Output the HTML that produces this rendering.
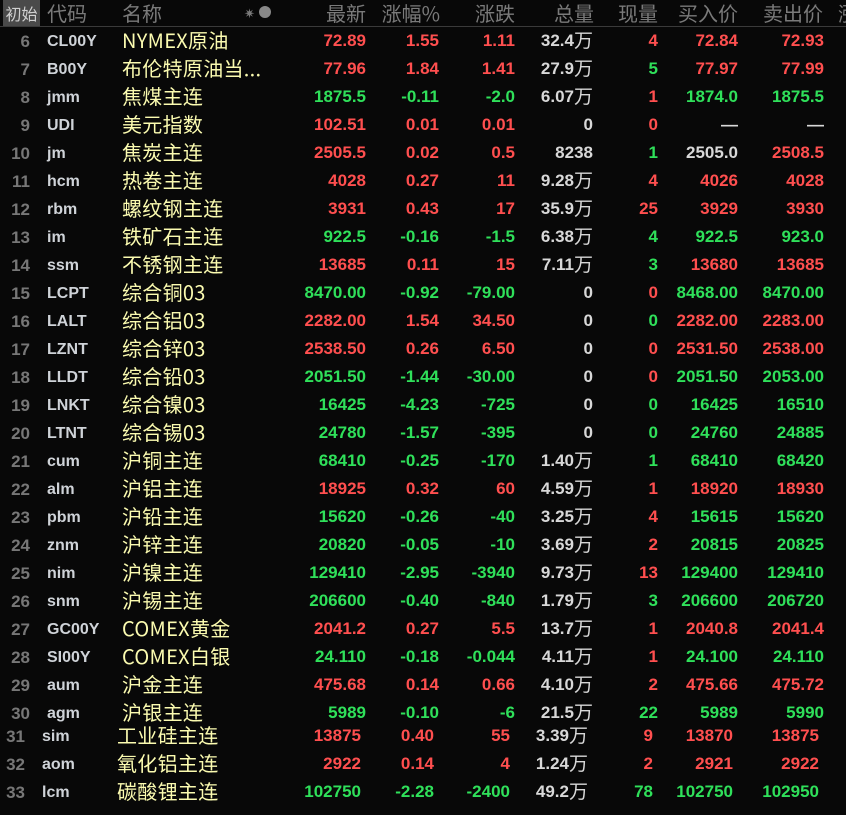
<!DOCTYPE html><html><head><meta charset="utf-8"><style>
body{margin:0;background:#080808;width:846px;height:815px;overflow:hidden;position:relative;font-family:"Liberation Sans",sans-serif}
.h{position:absolute;left:0;top:0;width:846px;height:26px;border-bottom:1px solid #3a3a3a}
.h span{position:absolute;top:0;height:26px;line-height:26px;font-size:20px;color:#7a7a7a;font-family:"Noto Sans CJK SC",sans-serif;white-space:nowrap}
.r{position:absolute;left:0;width:846px;height:28px}
.r span{position:absolute;top:1px;line-height:28px;height:28px;font-size:17px;font-weight:bold;white-space:nowrap}
.s{left:-5px}
.r span.n{right:816px;color:#777;top:2px}.r span.c{left:47px;color:#cfd3d8;font-size:16px;top:2px}
.r span.m{left:122px;top:0;font-family:"Noto Sans CJK SC",sans-serif;font-weight:normal;font-size:20px;color:#fbfbb0;letter-spacing:0.3px}
.a{right:480px}.b{right:407px}.d{right:331px}.v{right:253px;color:#d8d8d8}.x{right:188px}.y{right:108px}.z{right:22px}
.v i{font-style:normal;font-weight:normal;font-family:"Noto Sans CJK SC",sans-serif;font-size:19px;line-height:0;vertical-align:baseline;position:relative;top:1px}
.R{color:#ff4f4f}.G{color:#2fe05a}.W{color:#d8d8d8}
</style></head><body>
<div class="h">
<span style="left:3px;width:37px;background:#4a4a4a;color:#d0d0d0;text-align:center;font-size:16px">初始</span>
<span style="left:47px">代码</span><span style="left:122px">名称</span>
<span style="left:244px;font-size:13px">✷</span><span style="left:259px;top:6px;width:12px;height:12px;border-radius:50%;background:#888"></span>
<span style="right:480px">最新</span><span style="right:406px">涨幅%</span><span style="right:331px">涨跌</span><span style="right:252px">总量</span><span style="right:188px">现量</span><span style="right:108px">买入价</span><span style="right:23px">卖出价</span><span style="left:838px">涨</span>
</div>
<div class="r" style="top:26px"><span class="n">6</span><span class="c">CL00Y</span><span class="m">NYMEX原油</span><span class="a R">72.89</span><span class="b R">1.55</span><span class="d R">1.11</span><span class="v">32.4<i>万</i></span><span class="x R">4</span><span class="y R">72.84</span><span class="z R">72.93</span></div>
<div class="r" style="top:54px"><span class="n">7</span><span class="c">B00Y</span><span class="m">布伦特原油当...</span><span class="a R">77.96</span><span class="b R">1.84</span><span class="d R">1.41</span><span class="v">27.9<i>万</i></span><span class="x G">5</span><span class="y R">77.97</span><span class="z R">77.99</span></div>
<div class="r" style="top:82px"><span class="n">8</span><span class="c">jmm</span><span class="m">焦煤主连</span><span class="a G">1875.5</span><span class="b G">-0.11</span><span class="d G">-2.0</span><span class="v">6.07<i>万</i></span><span class="x R">1</span><span class="y G">1874.0</span><span class="z G">1875.5</span></div>
<div class="r" style="top:110px"><span class="n">9</span><span class="c">UDI</span><span class="m">美元指数</span><span class="a R">102.51</span><span class="b R">0.01</span><span class="d R">0.01</span><span class="v">0</span><span class="x R">0</span><span class="y W">—</span><span class="z W">—</span></div>
<div class="r" style="top:138px"><span class="n">10</span><span class="c">jm</span><span class="m">焦炭主连</span><span class="a R">2505.5</span><span class="b R">0.02</span><span class="d R">0.5</span><span class="v">8238</span><span class="x G">1</span><span class="y W">2505.0</span><span class="z R">2508.5</span></div>
<div class="r" style="top:166px"><span class="n">11</span><span class="c">hcm</span><span class="m">热卷主连</span><span class="a R">4028</span><span class="b R">0.27</span><span class="d R">11</span><span class="v">9.28<i>万</i></span><span class="x R">4</span><span class="y R">4026</span><span class="z R">4028</span></div>
<div class="r" style="top:194px"><span class="n">12</span><span class="c">rbm</span><span class="m">螺纹钢主连</span><span class="a R">3931</span><span class="b R">0.43</span><span class="d R">17</span><span class="v">35.9<i>万</i></span><span class="x R">25</span><span class="y R">3929</span><span class="z R">3930</span></div>
<div class="r" style="top:222px"><span class="n">13</span><span class="c">im</span><span class="m">铁矿石主连</span><span class="a G">922.5</span><span class="b G">-0.16</span><span class="d G">-1.5</span><span class="v">6.38<i>万</i></span><span class="x G">4</span><span class="y G">922.5</span><span class="z G">923.0</span></div>
<div class="r" style="top:250px"><span class="n">14</span><span class="c">ssm</span><span class="m">不锈钢主连</span><span class="a R">13685</span><span class="b R">0.11</span><span class="d R">15</span><span class="v">7.11<i>万</i></span><span class="x G">3</span><span class="y R">13680</span><span class="z R">13685</span></div>
<div class="r" style="top:278px"><span class="n">15</span><span class="c">LCPT</span><span class="m">综合铜03</span><span class="a G">8470.00</span><span class="b G">-0.92</span><span class="d G">-79.00</span><span class="v">0</span><span class="x R">0</span><span class="y G">8468.00</span><span class="z G">8470.00</span></div>
<div class="r" style="top:306px"><span class="n">16</span><span class="c">LALT</span><span class="m">综合铝03</span><span class="a R">2282.00</span><span class="b R">1.54</span><span class="d R">34.50</span><span class="v">0</span><span class="x G">0</span><span class="y R">2282.00</span><span class="z R">2283.00</span></div>
<div class="r" style="top:334px"><span class="n">17</span><span class="c">LZNT</span><span class="m">综合锌03</span><span class="a R">2538.50</span><span class="b R">0.26</span><span class="d R">6.50</span><span class="v">0</span><span class="x R">0</span><span class="y R">2531.50</span><span class="z R">2538.00</span></div>
<div class="r" style="top:362px"><span class="n">18</span><span class="c">LLDT</span><span class="m">综合铅03</span><span class="a G">2051.50</span><span class="b G">-1.44</span><span class="d G">-30.00</span><span class="v">0</span><span class="x R">0</span><span class="y G">2051.50</span><span class="z G">2053.00</span></div>
<div class="r" style="top:390px"><span class="n">19</span><span class="c">LNKT</span><span class="m">综合镍03</span><span class="a G">16425</span><span class="b G">-4.23</span><span class="d G">-725</span><span class="v">0</span><span class="x G">0</span><span class="y G">16425</span><span class="z G">16510</span></div>
<div class="r" style="top:418px"><span class="n">20</span><span class="c">LTNT</span><span class="m">综合锡03</span><span class="a G">24780</span><span class="b G">-1.57</span><span class="d G">-395</span><span class="v">0</span><span class="x G">0</span><span class="y G">24760</span><span class="z G">24885</span></div>
<div class="r" style="top:446px"><span class="n">21</span><span class="c">cum</span><span class="m">沪铜主连</span><span class="a G">68410</span><span class="b G">-0.25</span><span class="d G">-170</span><span class="v">1.40<i>万</i></span><span class="x G">1</span><span class="y G">68410</span><span class="z G">68420</span></div>
<div class="r" style="top:474px"><span class="n">22</span><span class="c">alm</span><span class="m">沪铝主连</span><span class="a R">18925</span><span class="b R">0.32</span><span class="d R">60</span><span class="v">4.59<i>万</i></span><span class="x R">1</span><span class="y R">18920</span><span class="z R">18930</span></div>
<div class="r" style="top:502px"><span class="n">23</span><span class="c">pbm</span><span class="m">沪铅主连</span><span class="a G">15620</span><span class="b G">-0.26</span><span class="d G">-40</span><span class="v">3.25<i>万</i></span><span class="x R">4</span><span class="y G">15615</span><span class="z G">15620</span></div>
<div class="r" style="top:530px"><span class="n">24</span><span class="c">znm</span><span class="m">沪锌主连</span><span class="a G">20820</span><span class="b G">-0.05</span><span class="d G">-10</span><span class="v">3.69<i>万</i></span><span class="x R">2</span><span class="y G">20815</span><span class="z G">20825</span></div>
<div class="r" style="top:558px"><span class="n">25</span><span class="c">nim</span><span class="m">沪镍主连</span><span class="a G">129410</span><span class="b G">-2.95</span><span class="d G">-3940</span><span class="v">9.73<i>万</i></span><span class="x R">13</span><span class="y G">129400</span><span class="z G">129410</span></div>
<div class="r" style="top:586px"><span class="n">26</span><span class="c">snm</span><span class="m">沪锡主连</span><span class="a G">206600</span><span class="b G">-0.40</span><span class="d G">-840</span><span class="v">1.79<i>万</i></span><span class="x G">3</span><span class="y G">206600</span><span class="z G">206720</span></div>
<div class="r" style="top:614px"><span class="n">27</span><span class="c">GC00Y</span><span class="m">COMEX黄金</span><span class="a R">2041.2</span><span class="b R">0.27</span><span class="d R">5.5</span><span class="v">13.7<i>万</i></span><span class="x R">1</span><span class="y R">2040.8</span><span class="z R">2041.4</span></div>
<div class="r" style="top:642px"><span class="n">28</span><span class="c">SI00Y</span><span class="m">COMEX白银</span><span class="a G">24.110</span><span class="b G">-0.18</span><span class="d G">-0.044</span><span class="v">4.11<i>万</i></span><span class="x R">1</span><span class="y G">24.100</span><span class="z G">24.110</span></div>
<div class="r" style="top:670px"><span class="n">29</span><span class="c">aum</span><span class="m">沪金主连</span><span class="a R">475.68</span><span class="b R">0.14</span><span class="d R">0.66</span><span class="v">4.10<i>万</i></span><span class="x R">2</span><span class="y R">475.66</span><span class="z R">475.72</span></div>
<div class="r" style="top:698px"><span class="n">30</span><span class="c">agm</span><span class="m">沪银主连</span><span class="a G">5989</span><span class="b G">-0.10</span><span class="d G">-6</span><span class="v">21.5<i>万</i></span><span class="x G">22</span><span class="y G">5989</span><span class="z G">5990</span></div>
<div class="r s" style="top:721px"><span class="n">31</span><span class="c">sim</span><span class="m">工业硅主连</span><span class="a R">13875</span><span class="b R">0.40</span><span class="d R">55</span><span class="v">3.39<i>万</i></span><span class="x R">9</span><span class="y R">13870</span><span class="z R">13875</span></div>
<div class="r s" style="top:749px"><span class="n">32</span><span class="c">aom</span><span class="m">氧化铝主连</span><span class="a R">2922</span><span class="b R">0.14</span><span class="d R">4</span><span class="v">1.24<i>万</i></span><span class="x R">2</span><span class="y R">2921</span><span class="z R">2922</span></div>
<div class="r s" style="top:777px"><span class="n">33</span><span class="c">lcm</span><span class="m">碳酸锂主连</span><span class="a G">102750</span><span class="b G">-2.28</span><span class="d G">-2400</span><span class="v">49.2<i>万</i></span><span class="x G">78</span><span class="y G">102750</span><span class="z G">102950</span></div>
</body></html>
